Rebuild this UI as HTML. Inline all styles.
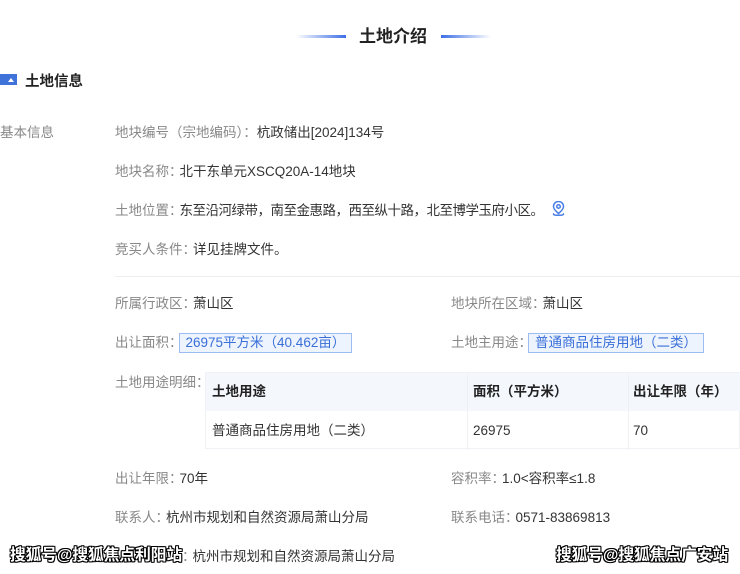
<!DOCTYPE html>
<html><head><meta charset="utf-8"><style>
*{margin:0;padding:0;box-sizing:border-box}
body{width:740px;height:574px;background:#fff;position:relative;overflow:hidden;font-family:"Liberation Sans","Noto Sans CJK SC",sans-serif;color:#333;font-size:13.5px}
.a{position:absolute;white-space:nowrap;line-height:20px}
.l{color:#888}
.v{margin-left:-3px}
.tag{display:inline-block;background:#eef4fe;border:1px solid #9dbcf2;color:#3a6fd8;padding:0 6px;line-height:18px;margin-left:-4px}
.wm{position:absolute;white-space:nowrap;font-weight:bold;font-size:15.7px;color:#fff;text-shadow:1px 0 0 #000,-1px 0 0 #000,0 1px 0 #000,0 -1px 0 #000,1px 1px 0 #000,-1px -1px 0 #000,1px -1px 0 #000,-1px 1px 0 #000}
</style></head><body>
<div style="position:absolute;left:296px;top:35px;width:50px;height:3px;background:linear-gradient(90deg,rgba(60,110,230,0),#3c6ee6)"></div>
<div style="position:absolute;left:441px;top:35px;width:50px;height:3px;background:linear-gradient(90deg,#3c6ee6,rgba(60,110,230,0))"></div>
<div class="a" style="left:359px;top:26px;font-size:17px;font-weight:bold;color:#222;line-height:22px">土地介绍</div>
<div style="position:absolute;left:0;top:74px;width:17px;height:11px;background:#3f73d9"><div style="position:absolute;left:8px;top:4px;width:0;height:0;border-left:3px solid transparent;border-right:3px solid transparent;border-bottom:4px solid #fff"></div></div>
<div class="a" style="left:25px;top:72px;font-size:14.5px;font-weight:bold;color:#222">土地信息</div>
<div class="a l" style="left:0;top:123px">基本信息</div>
<div class="a" style="left:115px;top:123px"><span class="l">地块编号（宗地编码）：</span>杭政储出[2024]134号</div>
<div class="a" style="left:115px;top:162px"><span class="l">地块名称：</span><span class="v">北干东单元XSCQ20A-14地块</span></div>
<div class="a" style="left:115px;top:201px"><span class="l">土地位置：</span><span class="v" style="letter-spacing:-0.5px">东至沿河绿带，南至金惠路，西至纵十路，北至博学玉府小区。</span></div>
<svg style="position:absolute;left:551px;top:201px" width="15" height="16" viewBox="0 0 15 16" fill="none" stroke="#4a7fe6" stroke-width="1.5"><path d="M7.5 12.5C4.5 10 2.5 8 2.5 5.5a5 5 0 0 1 10 0c0 2.5-2 4.5-5 7z"/><circle cx="7.5" cy="5.5" r="1.8"/><path d="M3 12.5c-1 .5-1 1.8 4.5 1.8s5.5-1.3 4.5-1.8"/></svg>
<div class="a" style="left:115px;top:240px"><span class="l">竞买人条件：</span><span class="v">详见挂牌文件。</span></div>
<div style="position:absolute;left:115px;top:276px;width:625px;height:1px;background:#eee"></div>
<div class="a" style="left:115px;top:294px"><span class="l">所属行政区：</span><span class="v">萧山区</span></div>
<div class="a" style="left:451px;top:294px"><span class="l">地块所在区域：</span><span class="v">萧山区</span></div>
<div class="a" style="left:115px;top:333px"><span class="l">出让面积：</span><span class="tag">26975平方米（40.462亩）</span></div>
<div class="a" style="left:451px;top:333px"><span class="l">土地主用途：</span><span class="tag">普通商品住房用地（二类）</span></div>
<div class="a l" style="left:115px;top:373px">土地用途明细：</div>
<div style="position:absolute;left:205px;top:372px;width:535px;height:77px;border:1px solid #f0f2f5">
<div style="position:absolute;left:0;top:0;width:535px;height:38px;background:#f4f8fd"></div>
<div style="position:absolute;left:261px;top:0;width:1px;height:77px;background:#eef0f3"></div>
<div style="position:absolute;left:422px;top:0;width:1px;height:77px;background:#eef0f3"></div>
</div>
<div class="a" style="left:212px;top:382px;font-weight:bold;color:#222">土地用途</div>
<div class="a" style="left:473px;top:382px;font-weight:bold;color:#222">面积（平方米）</div>
<div class="a" style="left:633px;top:382px;font-weight:bold;color:#222">出让年限（年）</div>
<div class="a" style="left:212px;top:421px">普通商品住房用地（二类）</div>
<div class="a" style="left:473px;top:421px">26975</div>
<div class="a" style="left:633px;top:421px">70</div>
<div class="a" style="left:115px;top:469px"><span class="l">出让年限：</span><span class="v">70年</span></div>
<div class="a" style="left:451px;top:469px"><span class="l">容积率：</span><span class="v">1.0&lt;容积率≤1.8</span></div>
<div class="a" style="left:115px;top:508px"><span class="l">联系人：</span><span class="v">杭州市规划和自然资源局萧山分局</span></div>
<div class="a" style="left:451px;top:508px"><span class="l">联系电话：</span><span class="v">0571-83869813</span></div>
<div class="a" style="left:182px;top:547px"><span class="l">：</span><span class="v">杭州市规划和自然资源局萧山分局</span></div>
<div class="wm" style="left:10px;top:546px;line-height:20px">搜狐号@搜狐焦点利阳站</div>
<div class="wm" style="left:556px;top:546px;line-height:20px">搜狐号@搜狐焦点广安站</div>
</body></html>
